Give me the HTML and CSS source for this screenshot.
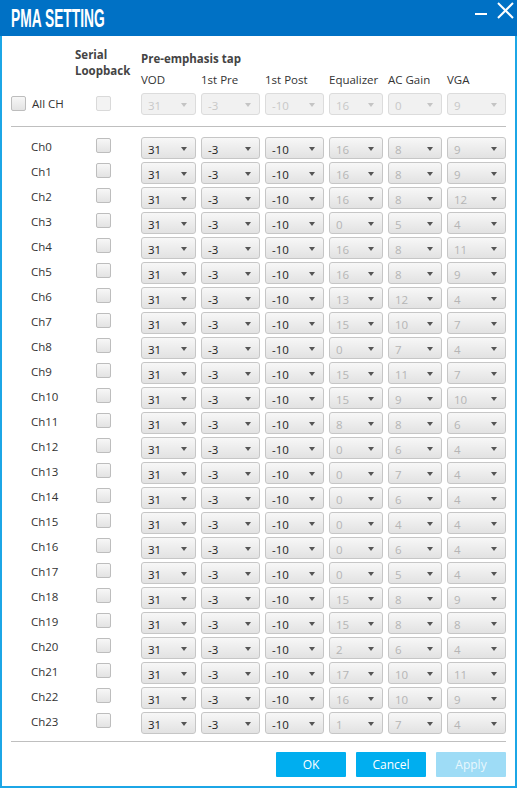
FILE: index.html
```html
<!DOCTYPE html>
<html>
<head>
<meta charset="utf-8">
<link rel="stylesheet" href="styles.css">
</head>
<body>
<div class="window">
  <div class="titlebar">
    <div class="title">PMA SETTING</div>
    <svg class="controls" width="45" height="22" viewBox="0 0 45 22">
      <line x1="3" y1="14" x2="15" y2="14" stroke="#fff" stroke-width="2"/>
      <line x1="26" y1="3" x2="41" y2="18" stroke="#fff" stroke-width="2"/>
      <line x1="41" y1="3" x2="26" y2="18" stroke="#fff" stroke-width="2"/>
    </svg>
  </div>
  <div class="content">
    <div class="head">
      <div class="serial-h">Serial<br>Loopback</div>
      <div class="pre-h">
        <div class="pre-title">Pre-emphasis tap</div>
        <div class="cols">
          <span>VOD</span><span>1st Pre</span><span>1st Post</span><span>Equalizer</span><span>AC Gain</span><span>VGA</span>
        </div>
      </div>
    </div>
    <div class="row all">
      <div class="lab"><span class="cb"></span><span class="all-t">All CH</span></div>
      <div class="cbcell"><span class="cb off"></span></div>
      <div class="sels">
        <div class="sel off">31</div><div class="sel off">-3</div><div class="sel off">-10</div><div class="sel off">16</div><div class="sel off">0</div><div class="sel off">9</div>
      </div>
    </div>
    <div class="sep top"></div>
    <div class="rows">
      <div class="row"><div class="lab ch">Ch0</div><div class="cbcell"><span class="cb"></span></div><div class="sels"><div class="sel">31</div><div class="sel">-3</div><div class="sel">-10</div><div class="sel dim">16</div><div class="sel dim">8</div><div class="sel dim">9</div></div></div>
      <div class="row"><div class="lab ch">Ch1</div><div class="cbcell"><span class="cb"></span></div><div class="sels"><div class="sel">31</div><div class="sel">-3</div><div class="sel">-10</div><div class="sel dim">16</div><div class="sel dim">8</div><div class="sel dim">9</div></div></div>
      <div class="row"><div class="lab ch">Ch2</div><div class="cbcell"><span class="cb"></span></div><div class="sels"><div class="sel">31</div><div class="sel">-3</div><div class="sel">-10</div><div class="sel dim">16</div><div class="sel dim">8</div><div class="sel dim">12</div></div></div>
      <div class="row"><div class="lab ch">Ch3</div><div class="cbcell"><span class="cb"></span></div><div class="sels"><div class="sel">31</div><div class="sel">-3</div><div class="sel">-10</div><div class="sel dim">0</div><div class="sel dim">5</div><div class="sel dim">4</div></div></div>
      <div class="row"><div class="lab ch">Ch4</div><div class="cbcell"><span class="cb"></span></div><div class="sels"><div class="sel">31</div><div class="sel">-3</div><div class="sel">-10</div><div class="sel dim">16</div><div class="sel dim">8</div><div class="sel dim">11</div></div></div>
      <div class="row"><div class="lab ch">Ch5</div><div class="cbcell"><span class="cb"></span></div><div class="sels"><div class="sel">31</div><div class="sel">-3</div><div class="sel">-10</div><div class="sel dim">16</div><div class="sel dim">8</div><div class="sel dim">9</div></div></div>
      <div class="row"><div class="lab ch">Ch6</div><div class="cbcell"><span class="cb"></span></div><div class="sels"><div class="sel">31</div><div class="sel">-3</div><div class="sel">-10</div><div class="sel dim">13</div><div class="sel dim">12</div><div class="sel dim">4</div></div></div>
      <div class="row"><div class="lab ch">Ch7</div><div class="cbcell"><span class="cb"></span></div><div class="sels"><div class="sel">31</div><div class="sel">-3</div><div class="sel">-10</div><div class="sel dim">15</div><div class="sel dim">10</div><div class="sel dim">7</div></div></div>
      <div class="row"><div class="lab ch">Ch8</div><div class="cbcell"><span class="cb"></span></div><div class="sels"><div class="sel">31</div><div class="sel">-3</div><div class="sel">-10</div><div class="sel dim">0</div><div class="sel dim">7</div><div class="sel dim">4</div></div></div>
      <div class="row"><div class="lab ch">Ch9</div><div class="cbcell"><span class="cb"></span></div><div class="sels"><div class="sel">31</div><div class="sel">-3</div><div class="sel">-10</div><div class="sel dim">15</div><div class="sel dim">11</div><div class="sel dim">7</div></div></div>
      <div class="row"><div class="lab ch">Ch10</div><div class="cbcell"><span class="cb"></span></div><div class="sels"><div class="sel">31</div><div class="sel">-3</div><div class="sel">-10</div><div class="sel dim">15</div><div class="sel dim">9</div><div class="sel dim">10</div></div></div>
      <div class="row"><div class="lab ch">Ch11</div><div class="cbcell"><span class="cb"></span></div><div class="sels"><div class="sel">31</div><div class="sel">-3</div><div class="sel">-10</div><div class="sel dim">8</div><div class="sel dim">8</div><div class="sel dim">6</div></div></div>
      <div class="row"><div class="lab ch">Ch12</div><div class="cbcell"><span class="cb"></span></div><div class="sels"><div class="sel">31</div><div class="sel">-3</div><div class="sel">-10</div><div class="sel dim">0</div><div class="sel dim">6</div><div class="sel dim">4</div></div></div>
      <div class="row"><div class="lab ch">Ch13</div><div class="cbcell"><span class="cb"></span></div><div class="sels"><div class="sel">31</div><div class="sel">-3</div><div class="sel">-10</div><div class="sel dim">0</div><div class="sel dim">7</div><div class="sel dim">4</div></div></div>
      <div class="row"><div class="lab ch">Ch14</div><div class="cbcell"><span class="cb"></span></div><div class="sels"><div class="sel">31</div><div class="sel">-3</div><div class="sel">-10</div><div class="sel dim">0</div><div class="sel dim">6</div><div class="sel dim">4</div></div></div>
      <div class="row"><div class="lab ch">Ch15</div><div class="cbcell"><span class="cb"></span></div><div class="sels"><div class="sel">31</div><div class="sel">-3</div><div class="sel">-10</div><div class="sel dim">0</div><div class="sel dim">4</div><div class="sel dim">4</div></div></div>
      <div class="row"><div class="lab ch">Ch16</div><div class="cbcell"><span class="cb"></span></div><div class="sels"><div class="sel">31</div><div class="sel">-3</div><div class="sel">-10</div><div class="sel dim">0</div><div class="sel dim">6</div><div class="sel dim">4</div></div></div>
      <div class="row"><div class="lab ch">Ch17</div><div class="cbcell"><span class="cb"></span></div><div class="sels"><div class="sel">31</div><div class="sel">-3</div><div class="sel">-10</div><div class="sel dim">0</div><div class="sel dim">5</div><div class="sel dim">4</div></div></div>
      <div class="row"><div class="lab ch">Ch18</div><div class="cbcell"><span class="cb"></span></div><div class="sels"><div class="sel">31</div><div class="sel">-3</div><div class="sel">-10</div><div class="sel dim">15</div><div class="sel dim">8</div><div class="sel dim">9</div></div></div>
      <div class="row"><div class="lab ch">Ch19</div><div class="cbcell"><span class="cb"></span></div><div class="sels"><div class="sel">31</div><div class="sel">-3</div><div class="sel">-10</div><div class="sel dim">15</div><div class="sel dim">8</div><div class="sel dim">8</div></div></div>
      <div class="row"><div class="lab ch">Ch20</div><div class="cbcell"><span class="cb"></span></div><div class="sels"><div class="sel">31</div><div class="sel">-3</div><div class="sel">-10</div><div class="sel dim">2</div><div class="sel dim">6</div><div class="sel dim">4</div></div></div>
      <div class="row"><div class="lab ch">Ch21</div><div class="cbcell"><span class="cb"></span></div><div class="sels"><div class="sel">31</div><div class="sel">-3</div><div class="sel">-10</div><div class="sel dim">17</div><div class="sel dim">10</div><div class="sel dim">11</div></div></div>
      <div class="row"><div class="lab ch">Ch22</div><div class="cbcell"><span class="cb"></span></div><div class="sels"><div class="sel">31</div><div class="sel">-3</div><div class="sel">-10</div><div class="sel dim">16</div><div class="sel dim">10</div><div class="sel dim">9</div></div></div>
      <div class="row"><div class="lab ch">Ch23</div><div class="cbcell"><span class="cb"></span></div><div class="sels"><div class="sel">31</div><div class="sel">-3</div><div class="sel">-10</div><div class="sel dim">1</div><div class="sel dim">7</div><div class="sel dim">4</div></div></div>
    </div>
    <div class="sep bottom"></div>
    <div class="buttons">
      <button class="btn">OK</button>
      <button class="btn">Cancel</button>
      <button class="btn disabled">Apply</button>
    </div>
  </div>
</div>
</body>
</html>
```
FILE: styles.css
```css
* { box-sizing: border-box; margin: 0; padding: 0; }
html, body { width: 517px; height: 788px; overflow: hidden; background: #fff; }
body {
  font-family: "Open Sans", "Noto Sans", sans-serif;
  font-size: 11.5px;
  color: #333;
}
.window { display: flex; flex-direction: column; height: 788px; }
.titlebar {
  height: 36px;
  background: #0071c5;
  display: flex;
  align-items: center;
  padding-left: 11px;
  color: #fff;
}
.title {
  font-family: "Liberation Sans Narrow", "Liberation Sans", sans-serif;
  font-weight: bold;
  font-size: 26px;
  line-height: 36px;
  white-space: nowrap;
  transform: scaleX(0.53);
  transform-origin: left center;
}
.controls { margin-left: auto; align-self: flex-start; }
.content {
  flex: 1;
  border: 2px solid #1ca6e6;
  border-top: 0;
  padding: 0 9px;
  display: flex;
  flex-direction: column;
}
.head { display: flex; padding-top: 11px; height: 51px; }
.serial-h {
  margin-left: 64px;
  width: 66px;
  font-weight: bold;
  line-height: 16px;
  color: #444;
}
.pre-h { padding-top: 4px; }
.pre-title { font-weight: bold; line-height: 16px; color: #444; }
.cols {
  margin-top: 5px;
  display: grid;
  grid-template-columns: 55px 59px 59px 54px 54px 59px;
  column-gap: 5px;
  line-height: 16px;
}
.row { display: flex; align-items: center; height: 25px; }
.row.all { margin-top: 4px; }
.lab { width: 85px; display: flex; align-items: center; }
.lab.ch { padding-left: 20px; margin-bottom: 3px; }
.all-t { margin-left: 6px; }
.cbcell { width: 45px; display: flex; align-items: center; }
.cb {
  display: inline-block;
  width: 15px;
  height: 15px;
  border: 1px solid #bdbdbd;
  border-radius: 2px;
  background: linear-gradient(#f7f7f7, #e3e3e3);
}
.rows .cb { margin-bottom: 4px; }
.cb.off { border-color: #d9d9d9; background: #f3f3f3; }
.sels {
  display: grid;
  grid-template-columns: 55px 59px 59px 54px 54px 59px;
  column-gap: 5px;
}
.sel {
  position: relative;
  height: 22px;
  border: 1px solid #c6c6c6;
  border-radius: 3px;
  background: linear-gradient(#f7f7f7, #e2e2e2);
  padding: 4px 0 0 6px;
  line-height: 16px;
  color: #222;
}
.sel::after {
  content: "";
  position: absolute;
  right: 8px;
  top: 9px;
  border-left: 3.5px solid transparent;
  border-right: 3.5px solid transparent;
  border-top: 4px solid #555;
}
.sel.dim { color: #b5b5b5; }
.sel.off {
  color: #c8c8c8;
  border-color: #dcdcdc;
  background: #f1f1f1;
}
.sel.off::after { border-top-color: #c4c4c4; }
.sep { height: 1px; background: #bfbfbf; }
.sep.top { margin-top: 10px; }
.rows { margin-top: 8px; }
.sep.bottom { margin-top: 6px; }
.buttons {
  margin-top: 10px;
  display: flex;
  justify-content: flex-end;
  gap: 10px;
}
.btn {
  width: 70px;
  height: 25px;
  border: 0;
  border-radius: 1px;
  background: #00aeef;
  color: #fff;
  font-family: "Open Sans", "Noto Sans", sans-serif;
  font-size: 12px;
}
.btn.disabled { background: #9edcf6; color: #e8f7fd; }
```
